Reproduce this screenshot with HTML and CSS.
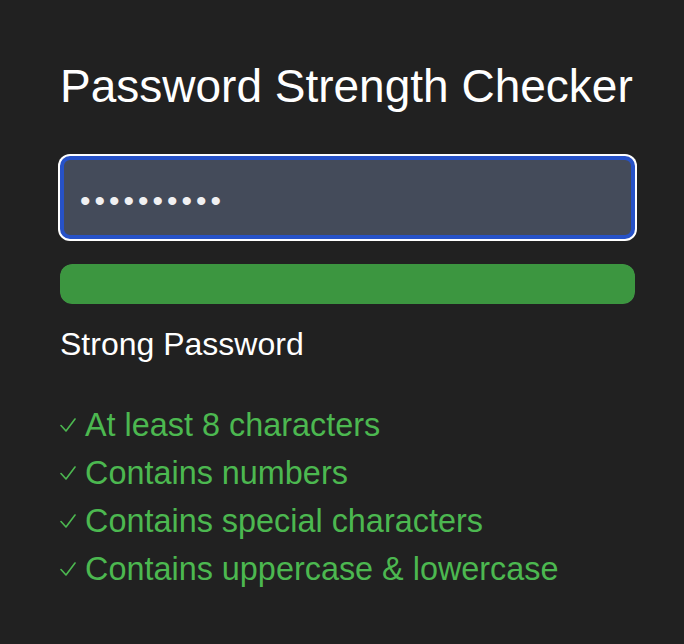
FILE: index.html
```html
<!DOCTYPE html>
<html lang="en">
<head>
<meta charset="utf-8">
<title>Password Strength Checker</title>
<link rel="stylesheet" href="styles.css">
</head>
<body>
<main class="checker">
  <h1 class="title">Password Strength Checker</h1>
  <input class="pw-input" type="password" value="Secure#123" aria-label="Password" autofocus>
  <div class="meter"><div class="meter-fill" style="width: 100%"></div></div>
  <p class="status">Strong Password</p>
  <ul class="rules">
    <li class="rule"><svg class="check" viewBox="0 0 16 15" width="16" height="15"><path d="M1 7.5 L6 13 L15 1"/></svg><span>At least 8 characters</span></li>
    <li class="rule"><svg class="check" viewBox="0 0 16 15" width="16" height="15"><path d="M1 7.5 L6 13 L15 1"/></svg><span>Contains numbers</span></li>
    <li class="rule"><svg class="check" viewBox="0 0 16 15" width="16" height="15"><path d="M1 7.5 L6 13 L15 1"/></svg><span>Contains special characters</span></li>
    <li class="rule"><svg class="check" viewBox="0 0 16 15" width="16" height="15"><path d="M1 7.5 L6 13 L15 1"/></svg><span>Contains uppercase &amp; lowercase</span></li>
  </ul>
</main>
</body>
</html>
```

FILE: styles.css
```css
html, body {
  margin: 0;
  padding: 0;
  background: #212121;
  height: 100%;
}

body {
  font-family: "Liberation Sans", Arial, sans-serif;
  color: #ffffff;
}

.checker {
  width: 575px;
  padding: 59px 0 0 60px;
  display: flex;
  flex-direction: column;
}

.title {
  margin: 0;
  font-size: 46px;
  line-height: 54px;
  font-weight: 400;
  color: #ffffff;
}

.pw-input {
  margin: 43px 0 0 0;
  box-sizing: border-box;
  width: 575px;
  height: 83px;
  padding: 7px 0 0 16px;
  background: #444b5a;
  border: 4px solid #2752c8;
  border-radius: 10px;
  box-shadow: 0 0 0 2px #ffffff;
  outline: none;
  color: #f0f0f2;
  font-family: "Liberation Sans", Arial, sans-serif;
  font-size: 30px;
  letter-spacing: 4px;
}

.meter {
  margin-top: 25px;
  height: 40px;
  border-radius: 12px;
  background: #333333;
  overflow: hidden;
}

.meter-fill {
  height: 100%;
  background: #3c9640;
  border-radius: 12px;
}

.status {
  margin: 20px 0 0 0;
  font-size: 32px;
  line-height: 40px;
  color: #ffffff;
}

.rules {
  list-style: none;
  margin: 37px 0 0 0;
  padding: 0;
}

.rule {
  display: flex;
  align-items: center;
  gap: 9px;
  height: 48px;
  font-size: 32.4px;
  line-height: 48px;
  color: #4cb850;
}

.check {
  flex: none;
  fill: none;
  stroke: #4cb850;
  stroke-width: 1.6;
  stroke-linecap: round;
  stroke-linejoin: round;
}
```
